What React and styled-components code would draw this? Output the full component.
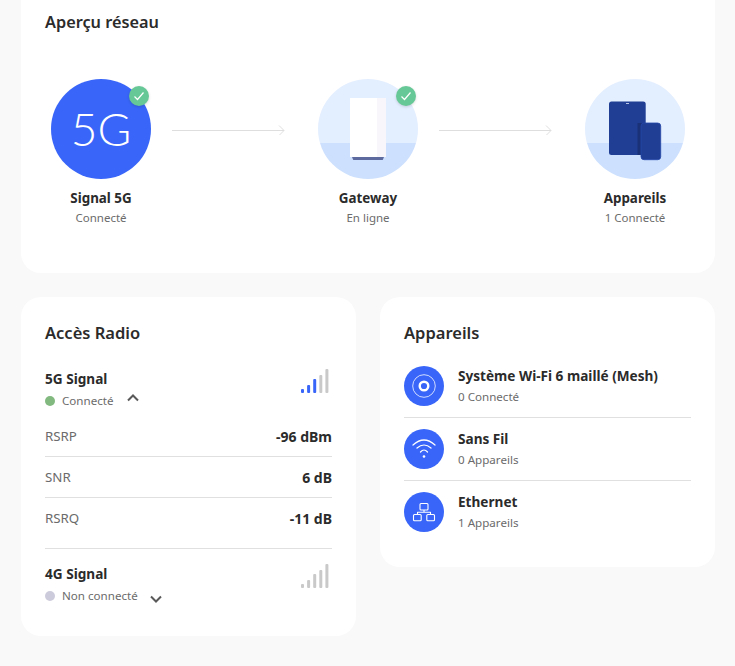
import React from "react";
import styled, { createGlobalStyle } from "styled-components";

const Global = createGlobalStyle`
  html, body { margin: 0; padding: 0; background: #f9f9f9; overflow: hidden; }
  body { font-family: "Noto Sans", "Open Sans", sans-serif; color: #2b2b2b; }
`;

const Page = styled.div`
  width: 694px;
  height: 666px;
  margin-left: 21px;
  display: flex;
  flex-direction: column;
  gap: 24px;
`;

const Card = styled.section`
  background: #fff;
  border-radius: 20px;
  padding: 24px;
  box-sizing: border-box;
`;

const TopCard = styled(Card)`
  height: 273px;
  padding: 10px 30px 0;
  border-radius: 0 0 20px 20px;
`;

const Title = styled.h2`
  margin: 0;
  font-size: 16.5px;
  line-height: 24px;
  font-weight: 600;
`;

const TopTitle = styled(Title)`
  margin-left: -6px;
  font-size: 16.3px;
`;

const Flow = styled.div`
  display: flex;
  align-items: flex-start;
  margin-top: 45px;
`;

const Step = styled.div`
  width: 100px;
  flex: none;
  text-align: center;
`;

const Bubble = styled.div`
  position: relative;
  width: 100px;
  height: 100px;
  border-radius: 50%;
  background: ${(p) => (p.$solid ? "#3966f8" : "transparent")};
  display: flex;
  align-items: center;
  justify-content: center;
  margin-bottom: 9px;
`;

const FiveG = styled.span`
  font-family: Lato, sans-serif;
  font-weight: 300;
  font-size: 46px;
  line-height: 1;
  color: #fff;
`;

const Badge = styled.span`
  position: absolute;
  top: 7px;
  right: 2px;
  width: 20px;
  height: 20px;
  border-radius: 50%;
  background: #67c897;
  box-shadow: 0 1px 3px rgba(0, 0, 0, 0.15);
  display: flex;
  align-items: center;
  justify-content: center;
`;

const StepName = styled.div`
  font-size: 13.4px;
  line-height: 20px;
  font-weight: 700;
  white-space: nowrap;
`;

const StepState = styled.div`
  font-size: 11.5px;
  line-height: 20px;
  color: #6b6b6b;
  white-space: nowrap;
`;

const Connector = styled.svg`
  flex: none;
  width: 113px;
  height: 10px;
  margin: 46px 33px 0 21px;
`;

const Columns = styled.div`
  display: grid;
  grid-template-columns: 335px 335px;
  gap: 24px;
  align-items: start;
`;

const RadioCard = styled(Card)`
  height: 339px;
`;

const DevicesCard = styled(Card)`
  height: 270px;
`;

const CardTitle = styled(Title)`
  margin-bottom: ${(p) => p.$gap}px;
`;

const SignalHead = styled.div`
  display: flex;
  justify-content: space-between;
  align-items: flex-start;
  padding-top: 12px;
`;

const SecondHead = styled(SignalHead)`
  padding-top: 15px;
`;

const SignalName = styled.div`
  font-size: 13.6px;
  line-height: 20px;
  font-weight: 700;
`;

const SignalState = styled.div`
  display: flex;
  align-items: center;
  font-size: 11.6px;
  line-height: 22px;
  padding-top: 1px;
  color: #6b6b6b;
`;

const Dot = styled.span`
  width: 10px;
  height: 10px;
  border-radius: 50%;
  margin-right: 7px;
  background: ${(p) => p.$color};
`;

const Chevron = styled.svg`
  width: 14px;
  height: 10px;
  margin-left: ${(p) => p.$gap}px;
  margin-top: ${(p) => p.$drop}px;
`;

const Bars = styled.svg`
  width: 28px;
  height: 24px;
  margin-right: 3px;
`;

const Metrics = styled.div`
  margin-top: 4px;
`;

const Metric = styled.div`
  display: flex;
  justify-content: space-between;
  align-items: center;
  height: 40px;
  font-size: 13.300px;
  color: #6b6b6b;
  border-bottom: 1px solid ${(p) => (p.$last ? "transparent" : "#e0e0e0")};
`;

const MetricValue = styled.b`
  font-size: 14px;
  font-weight: 700;
  color: #2b2b2b;
`;

const Separator = styled.hr`
  margin: 9px 0 0;
  border: 0;
  border-top: 1px solid #e0e0e0;
`;

const DeviceRow = styled.div`
  display: flex;
  align-items: flex-start;
  gap: 14px;
  height: 63px;
  box-sizing: border-box;
  padding-top: 11px;
  border-bottom: 1px solid ${(p) => (p.$last ? "transparent" : "#e0e0e0")};
`;

const DeviceIcon = styled.span`
  width: 40px;
  height: 40px;
  flex: none;
  border-radius: 50%;
  background: #3966f8;
  display: flex;
  align-items: center;
  justify-content: center;
`;

const DeviceName = styled.div`
  font-size: 13.6px;
  line-height: 20px;
  font-weight: 700;
`;

const DeviceSub = styled.div`
  font-size: 11.6px;
  line-height: 22px;
  color: #6b6b6b;
`;

const Check = () => (
  <Badge>
    <svg width="12" height="12" viewBox="0 0 12 12" fill="none" stroke="#fff" strokeWidth="1.2">
      <path d="M1.500 6.500 4.500 9.500 10.500 2.500" />
    </svg>
  </Badge>
);

const Arrow = () => (
  <Connector viewBox="0 0 113 10" fill="none" stroke="#dedede">
    <path d="M0 5.500h112M107 .5l5 5-5 5" />
  </Connector>
);

const Scene = ({ children }) => (
  <svg width="100" height="100" viewBox="0 0 100 100">
    <clipPath id="round">
      <circle cx="50" cy="50" r="50" />
    </clipPath>
    <g clipPath="url(#round)">
      <rect width="100" height="64" fill="#e3eeff" />
      <rect y="64" width="100" height="36" fill="#cde0fd" />
      {children}
    </g>
  </svg>
);

const SignalBars = ({ on }) => (
  <Bars viewBox="0 0 28 24">
    {[4, 8, 14, 18, 24].map((h, i) => (
      <rect key={h} x={i * 6.1} y={24 - h} width="3" height={h} rx="1" fill={i < on ? "#3966f8" : "#c9c9c9"} />
    ))}
  </Bars>
);

const Up = () => (
  <Chevron $gap={12} $drop={-6} viewBox="0 0 14 10" fill="none" stroke="#595959" strokeWidth="2">
    <path d="M2 7.500 7 2.500l5 5" />
  </Chevron>
);

const Down = () => (
  <Chevron $gap={11} $drop={6} viewBox="0 0 14 10" fill="none" stroke="#595959" strokeWidth="2">
    <path d="M2 2.500 7 7.500l5-5" />
  </Chevron>
);

const MeshIcon = () => (
  <svg width="26" height="26" viewBox="0 0 26 26" fill="none" stroke="#fff">
    <circle cx="13" cy="13" r="11.300" strokeWidth="0.9" opacity="0.85" />
    <circle cx="13" cy="13" r="4.300" strokeWidth="2.400" />
  </svg>
);

const WifiIcon = () => (
  <svg width="24" height="24" viewBox="0 0 24 24" fill="none" stroke="#fff" strokeWidth="1.200" strokeLinecap="round">
    <path d="M1 8Q12-2 23 8M5 11Q12 5 19 11M8.500 15Q12 11 15.500 15" />
    <circle cx="12" cy="19.500" r="1.300" fill="#fff" stroke="none" />
  </svg>
);

const LanIcon = () => (
  <svg width="24" height="24" viewBox="0 0 24 24" fill="none" stroke="#fff" strokeWidth="1.100" strokeLinejoin="round">
    <rect x="8" y="3.500" width="8" height="6.500" rx="1" />
    <rect x="1.500" y="14.500" width="7.700" height="6.200" rx="1" />
    <rect x="14.800" y="14.500" width="7.700" height="6.200" rx="1" />
    <path d="M12 10v2.300M5.500 14.500v-2.200h13v2.200" />
  </svg>
);

export default function App() {
  return (
    <Page>
      <Global />
      <TopCard>
        <TopTitle>Aperçu réseau</TopTitle>
        <Flow>
          <Step>
            <Bubble $solid>
              <FiveG>5G</FiveG>
              <Check />
            </Bubble>
            <StepName>Signal 5G</StepName>
            <StepState>Connecté</StepState>
          </Step>
          <Arrow />
          <Step>
            <Bubble>
              <Scene>
                <rect x="32" y="19" width="36" height="59" fill="#fff" />
                <rect x="59" y="19" width="9" height="59" fill="#f8f5fb" />
                <path d="M34 78h32l-1 2.500a1 1 0 0 1-1 .5H36a1 1 0 0 1-1-.5z" fill="#5d6a9e" />
              </Scene>
              <Check />
            </Bubble>
            <StepName>Gateway</StepName>
            <StepState>En ligne</StepState>
          </Step>
          <Arrow />
          <Step>
            <Bubble>
              <Scene>
                <rect x="24" y="22.500" width="36.700" height="53.500" rx="2.500" fill="#1f3e94" />
                <rect x="41" y="24" width="3" height="0.800" fill="#dfe6f7" />
                <rect x="52.500" y="44" width="6" height="32" fill="#1a3178" />
                <rect x="56" y="44" width="19.700" height="36.700" rx="3" fill="#1f3e94" stroke="#2546a8" strokeWidth="0.800" />
              </Scene>
            </Bubble>
            <StepName>Appareils</StepName>
            <StepState>1 Connecté</StepState>
          </Step>
        </Flow>
      </TopCard>
      <Columns>
        <RadioCard>
          <CardTitle $gap={12}>Accès Radio</CardTitle>
          <SignalHead>
            <div>
              <SignalName>5G Signal</SignalName>
              <SignalState>
                <Dot $color="#81b97f" />
                Connecté
                <Up />
              </SignalState>
            </div>
            <SignalBars on={3} />
          </SignalHead>
          <Metrics>
            <Metric>
              RSRP<MetricValue>-96 dBm</MetricValue>
            </Metric>
            <Metric>
              SNR<MetricValue>6 dB</MetricValue>
            </Metric>
            <Metric $last>
              RSRQ<MetricValue>-11 dB</MetricValue>
            </Metric>
          </Metrics>
          <Separator />
          <SecondHead>
            <div>
              <SignalName>4G Signal</SignalName>
              <SignalState>
                <Dot $color="#cccbdc" />
                Non connecté
                <Down />
              </SignalState>
            </div>
            <SignalBars on={0} />
          </SecondHead>
        </RadioCard>
        <DevicesCard>
          <CardTitle $gap={10}>Appareils</CardTitle>
          <DeviceRow>
            <DeviceIcon>
              <MeshIcon />
            </DeviceIcon>
            <div>
              <DeviceName>Système Wi-Fi 6 maillé (Mesh)</DeviceName>
              <DeviceSub>0 Connecté</DeviceSub>
            </div>
          </DeviceRow>
          <DeviceRow>
            <DeviceIcon>
              <WifiIcon />
            </DeviceIcon>
            <div>
              <DeviceName>Sans Fil</DeviceName>
              <DeviceSub>0 Appareils</DeviceSub>
            </div>
          </DeviceRow>
          <DeviceRow $last>
            <DeviceIcon>
              <LanIcon />
            </DeviceIcon>
            <div>
              <DeviceName>Ethernet</DeviceName>
              <DeviceSub>1 Appareils</DeviceSub>
            </div>
          </DeviceRow>
        </DevicesCard>
      </Columns>
    </Page>
  );
}
